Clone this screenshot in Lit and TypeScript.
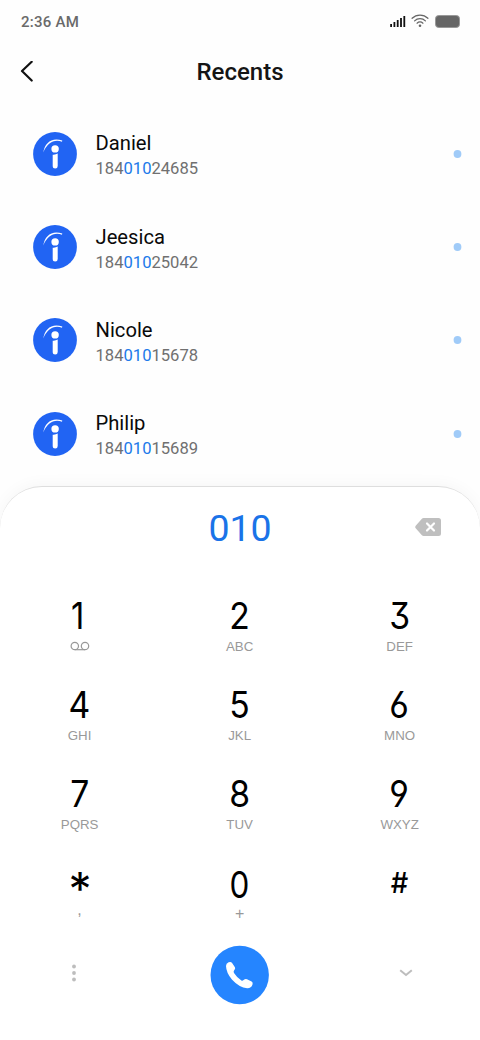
import { LitElement, html, css, svg, nothing } from "lit";
import { customElement, property } from "lit/decorators.js";

interface Contact { name: string; number: string; }
interface Key { symbol: string; letters: string; kind?: string; }

const QUERY = "010";

const CONTACTS: Contact[] = [
  { name: "Daniel", number: "18401024685" },
  { name: "Jeesica", number: "18401025042" },
  { name: "Nicole", number: "18401015678" },
  { name: "Philip", number: "18401015689" },
];

const KEYS: Key[] = [
  { symbol: "1", letters: "", kind: "one" },
  { symbol: "2", letters: "ABC" },
  { symbol: "3", letters: "DEF" },
  { symbol: "4", letters: "GHI" },
  { symbol: "5", letters: "JKL" },
  { symbol: "6", letters: "MNO" },
  { symbol: "7", letters: "PQRS" },
  { symbol: "8", letters: "TUV" },
  { symbol: "9", letters: "WXYZ" },
  { symbol: "*", letters: ",", kind: "star" },
  { symbol: "0", letters: "+", kind: "zero" },
  { symbol: "#", letters: "", kind: "hash" },
];

@customElement("status-bar")
class StatusBar extends LitElement {
  static styles = css`
    :host { display: flex; justify-content: space-between; height: 44px; padding: 0 20px 0 21px; }
    .time { font: 500 15px/45px Roboto, sans-serif; color: #6a6a6a; letter-spacing: 0.25px; }
    svg { display: block; }
  `;
  render() {
    const bars = [3, 5, 7, 9, 11];
    return html`
      <span class="time">2:36 AM</span>
      <svg width="71" height="44" viewBox="0 0 71 44">
        ${bars.map((h, i) => svg`<rect x=${1.2 + i * 3.3} y=${27 - h} width="1.8" height=${h} fill="#111" />`)}
        <g fill="none" stroke="#666" stroke-width="1.25" stroke-linecap="round">
          <path d="M23.1 18.3a11.2 11.2 0 0 1 15.8 0" />
          <path d="M25.6 20.9a7.6 7.6 0 0 1 10.8 0" />
          <path d="M28.1 23.2a4.1 4.1 0 0 1 5.8 0" />
        </g>
        <circle cx="31" cy="25.7" r="1.3" fill="#666" />
        <rect x="46.5" y="15.5" width="24" height="12" rx="3.3" fill="#666" stroke="#999" stroke-width="1" />
      </svg>
    `;
  }
}

@customElement("contact-row")
class ContactRow extends LitElement {
  @property({ attribute: false }) contact!: Contact;
  static styles = css`
    :host { display: flex; align-items: center; height: 93.35px; padding: 0 18px 0 33px; }
    .avatar { display: block; flex: none; width: 44px; height: 44px; }
    .text { flex: 1; margin-left: 18.5px; font-family: Roboto, sans-serif; }
    .name { font-size: 20.2px; line-height: 26px; color: #0a0a0a; margin-top: 3px; }
    .number { font-size: 16.6px; line-height: 26px; margin-bottom: -2px; color: #707070; }
    .match { color: #2079ea; }
    .dot { display: block; width: 9px; height: 8px; }
  `;
  render() {
    const { name, number } = this.contact;
    const at = number.indexOf(QUERY);
    return html`
      <svg class="avatar" viewBox="0 0 44 44">
        <circle cx="22" cy="22" r="21.9" fill="#2164f3" />
        <path d="M10.3 20.6C11.5 10.6 19.3 4.8 29.3 8.5L29 9.7C21.5 6.8 14 10.600 10.300 20.600z" fill="#fff" />
        <circle cx="22.1" cy="16.900" r="3.700" fill="#fff" />
        <path d="M19.700 22.700Q22.500 23 24.700 21.600V34.100a2.500 2.500 0 0 1-5 0z" fill="#fff" />
      </svg>
      <div class="text">
        <div class="name">${name}</div>
        <div class="number">${number.slice(0, at)}<span class="match">${QUERY}</span>${number.slice(at + QUERY.length)}</div>
      </div>
      <svg class="dot" viewBox="0 0 9 8"><circle cx="4.500" cy="4" r="3.900" fill="#a0cbf8" /></svg>
    `;
  }
}

@customElement("dial-key")
class DialKey extends LitElement {
  @property({ attribute: false }) key!: Key;
  static styles = css`
    :host { display: flex; flex-direction: column; align-items: center; }
    .symbol {
      height: 44px; font: 400 37px/44px Inter, sans-serif; color: #000;
      font-feature-settings: "cv03", "cv04", "cv09"; transform: translateX(-0.7px) scaleX(0.91);
    }
    .one { transform: translateX(-2px) scaleX(0.88); }
    .star { font-size: 46px; line-height: 56px; font-weight: 400; transform: none; }
    .zero { line-height: 47px; transform: translateX(-0.3px) scaleX(0.85); }
    .hash { font-size: 28px; font-weight: 450; transform: translateX(-0.5px) scaleX(0.98); }
    .letters { font: 13.3px/16px "Liberation Sans", sans-serif; color: #999; margin-top: 1px; transform: translateX(-0.4px); }
    .zero-letters { font-size: 16px; line-height: 16px; }
    .star-letters { font-size: 16px; line-height: 8px; }
    svg { display: block; margin-top: 3px; }
  `;
  render() {
    const { symbol, letters, kind = "" } = this.key;
    return html`
      <span class="symbol ${kind}">${symbol}</span>
      ${kind === "one"
        ? html`<svg width="20" height="11" viewBox="0 0 20 11">
            <g fill="none" stroke="#999" stroke-width="1.2">
              <circle cx="4.8" cy="5" r="3.7" /><circle cx="15" cy="5" r="3.7" /><path d="M4.8 8.7H15" />
            </g>
          </svg>`
        : letters ? html`<span class="letters ${kind}-letters">${letters}</span>` : nothing}
    `;
  }
}

@customElement("dial-pad")
class DialPad extends LitElement {
  static styles = css`
    :host {
      display: block; box-sizing: border-box; height: 554px;
      border-top: 1px solid #dedede; border-radius: 42px 42px 0 0;
      background: #fff; box-shadow: 0 -2px 16px rgba(0, 0, 0, 0.035);
    }
    .entry { display: grid; grid-template-columns: 1fr auto 1fr; align-items: center; height: 81px; padding: 0 39.5px; }
    .value { grid-column: 2; font: 400 37.5px/83px Roboto, sans-serif; color: #1a73e8; }
    .erase { justify-self: end; margin-bottom: 3px; }
    .keys { display: grid; grid-template-columns: repeat(3, 160px); grid-auto-rows: 88.9px; margin-top: 26px; }
    .actions { display: grid; grid-template-columns: repeat(3, 160px); justify-items: center; align-items: center; margin-top: -5px; }
    .more { margin: 0 13px 3px 0; }
    .collapse { margin: 0 0 3px 12px; }
    svg { display: block; }
  `;
  render() {
    return html`
      <div class="entry">
        <span class="value">${QUERY}</span>
        <svg class="erase" width="26" height="18" viewBox="0 0 26 18">
          <path d="M8.6 0H23.5Q26 0 26 2.5V15.5Q26 18 23.5 18H8.6Q7.6 18 6.9 17.2L.7 10.3Q-.3 9 .7 7.7L6.9.8Q7.6 0 8.6 0z" fill="#bfbfbf" />
          <path d="M12 5.5l7 7M19 5.5l-7 7" stroke="#fff" stroke-width="2.2" stroke-linecap="round" />
        </svg>
      </div>
      <div class="keys">${KEYS.map((key) => html`<dial-key .key=${key}></dial-key>`)}</div>
      <div class="actions">
        <svg class="more" width="6" height="18" viewBox="0 0 6 18" fill="#bdbdbd">
          <circle cx="3" cy="2.5" r="1.9" /><circle cx="3" cy="9" r="1.9" /><circle cx="3" cy="15.5" r="1.9" />
        </svg>
        <svg width="60" height="60" viewBox="0 0 60 60">
          <circle cx="29.7" cy="30" r="29.2" fill="#2585ff" />
          <path d="M18.6 17.3Q20.9 16.2 22.1 18L24.9 22.2Q25.500 23.400 24.700 24.600L23.900 25.800Q23.300 26.800 24 28Q27 32.800 31.400 35.400Q32.500 36 33.600 35Q35.200 33.600 37 34.200L41.600 36.500Q43.300 37.400 42.500 39.500Q41.300 43.400 37.200 43.300Q29.300 42.600 21.900 34.500Q16.200 27.700 16 21Q16 18.400 18.600 17.300z" fill="#fff" />
        </svg>
        <svg class="collapse" width="14" height="8" viewBox="0 0 14 8" fill="none" stroke="#bdbdbd" stroke-width="2">
          <path d="M1.2 1.2L7 6L12.8 1.2" />
        </svg>
      </div>
    `;
  }
}

@customElement("app-root")
class AppRoot extends LitElement {
  static styles = css`
    :host { display: flex; flex-direction: column; width: 480px; height: 1040px; overflow: hidden; background: #fefefe; }
    .title-bar { display: grid; grid-template-columns: 40px 1fr 40px; align-items: center; height: 56px; padding: 0 20px; }
    .title { margin: 0; font: 500 24px/56px Roboto, sans-serif; color: #151515; text-align: center; }
    .list { height: 379px; padding-top: 7px; flex: none; }
    svg { display: block; }
  `;
  render() {
    return html`
      <status-bar></status-bar>
      <header class="title-bar">
        <svg width="14" height="22" viewBox="0 0 14 22" fill="none" stroke="#111" stroke-width="2.2" stroke-linecap="round" stroke-linejoin="round">
          <path d="M11.7 .8L2 10L11.7 19.5" />
        </svg>
        <h1 class="title">Recents</h1>
      </header>
      <div class="list">${CONTACTS.map((c) => html`<contact-row .contact=${c}></contact-row>`)}</div>
      <dial-pad></dial-pad>
    `;
  }
}
